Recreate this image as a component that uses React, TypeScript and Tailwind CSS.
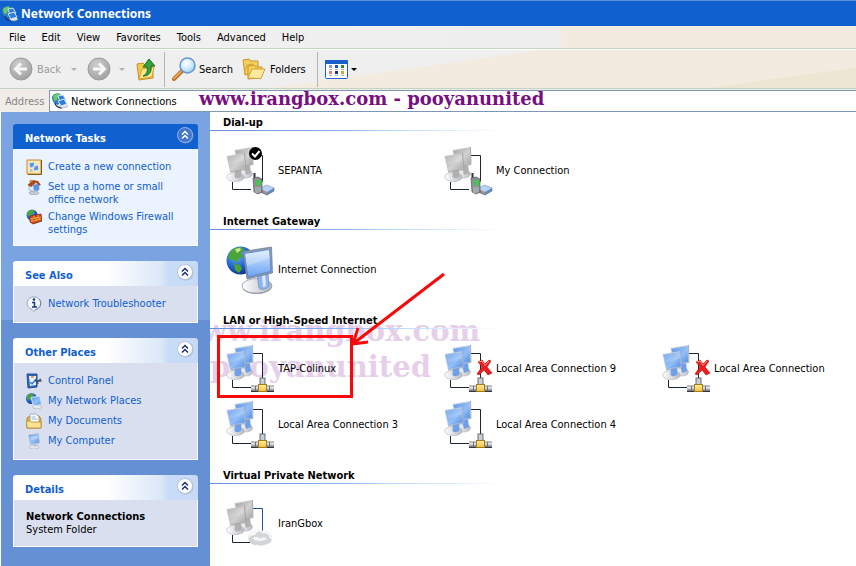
import type { ReactNode } from 'react';

type Tone = 'blue' | 'gray';
type Kind = 'modem' | 'modemDefault' | 'gateway' | 'lan' | 'lanOff' | 'vpn';

interface Connection {
  name: string;
  kind: Kind;
}

const MENUS = ['File', 'Edit', 'View', 'Favorites', 'Tools', 'Advanced', 'Help'];

const GROUPS: { title: string; items: Connection[] }[] = [
  {
    title: 'Dial-up',
    items: [
      { name: 'SEPANTA', kind: 'modemDefault' },
      { name: 'My Connection', kind: 'modem' },
    ],
  },
  { title: 'Internet Gateway', items: [{ name: 'Internet Connection', kind: 'gateway' }] },
  {
    title: 'LAN or High-Speed Internet',
    items: [
      { name: 'TAP-Colinux', kind: 'lan' },
      { name: 'Local Area Connection 9', kind: 'lanOff' },
      { name: 'Local Area Connection', kind: 'lanOff' },
      { name: 'Local Area Connection 3', kind: 'lan' },
      { name: 'Local Area Connection 4', kind: 'lan' },
    ],
  },
  { title: 'Virtual Private Network', items: [{ name: 'IranGbox', kind: 'vpn' }] },
];

/* ---------- shared gradients ---------- */

function Defs() {
  return (
    <svg className="absolute size-0" aria-hidden="true">
      <defs>
        <linearGradient id="scr-blue" x1="0" y1="0" x2="1" y2="1">
          <stop offset="0" stopColor="#5b93e8" />
          <stop offset="0.55" stopColor="#93c0f8" />
          <stop offset="1" stopColor="#5089e0" />
        </linearGradient>
        <linearGradient id="scr-gray" x1="0" y1="0" x2="1" y2="1">
          <stop offset="0" stopColor="#a2a2a2" />
          <stop offset="0.55" stopColor="#d2d2d2" />
          <stop offset="1" stopColor="#a8a8a8" />
        </linearGradient>
        <linearGradient id="scr-light" x1="0" y1="0" x2="0" y2="1">
          <stop offset="0" stopColor="#d6eaff" />
          <stop offset="1" stopColor="#6ca3f0" />
        </linearGradient>
        <linearGradient id="base" x1="0" y1="0" x2="1" y2="0">
          <stop offset="0" stopColor="#ffffff" />
          <stop offset="1" stopColor="#b4bac3" />
        </linearGradient>
        <linearGradient id="metal" x1="0" y1="0" x2="0" y2="1">
          <stop offset="0" stopColor="#7f858c" />
          <stop offset="0.35" stopColor="#eceef0" />
          <stop offset="1" stopColor="#5a5f65" />
        </linearGradient>
        <linearGradient id="gold" x1="0" y1="0" x2="0" y2="1">
          <stop offset="0" stopColor="#fff0a8" />
          <stop offset="1" stopColor="#f4bf3c" />
        </linearGradient>
        <radialGradient id="globe" cx="0.35" cy="0.3" r="0.75">
          <stop offset="0" stopColor="#74b4f5" />
          <stop offset="0.6" stopColor="#1d62cc" />
          <stop offset="1" stopColor="#0a2f86" />
        </radialGradient>
        <radialGradient id="nav" cx="0.4" cy="0.3" r="0.7">
          <stop offset="0" stopColor="#cfcfcf" />
          <stop offset="1" stopColor="#a2a2a2" />
        </radialGradient>
        <radialGradient id="lens" cx="0.4" cy="0.35" r="0.7">
          <stop offset="0" stopColor="#ffffff" />
          <stop offset="0.6" stopColor="#cbe9fb" />
          <stop offset="1" stopColor="#8ec2ee" />
        </radialGradient>
      </defs>
    </svg>
  );
}

/* ---------- connection icons ---------- */

function Monitors({ tone }: { tone: Tone }) {
  const blue = tone === 'blue';
  const fill = blue ? 'url(#scr-blue)' : 'url(#scr-gray)';
  const side = blue ? '#93a6c2' : '#9a9a9a';
  const bezel = blue ? '#bccbe0' : '#c8c8c8';
  const neck = blue ? '#6f9fe8' : '#b0b0b0';
  return (
    <g>
      <ellipse cx="20" cy="27" rx="6.500" ry="4" fill="url(#base)" stroke="#b0b0b0" strokeWidth="0.6" />
      <path d="M18 19l6-1 1 8-5 2z" fill={neck} />
      <path d="M8.500 3L26.500 0l.5 17.500L12 20z" fill={bezel} />
      <path d="M26.500 0l.5 17.500L12 20" fill="none" stroke={side} strokeWidth="0.8" />
      <path d="M9.500 4l16-2.600.5 15.300L13 19z" fill={fill} />
      <ellipse cx="9.500" cy="30" rx="8.800" ry="4.600" fill="url(#base)" stroke="#b0b0b0" strokeWidth="0.6" />
      <path d="M9 22l6-1 .5 8c-2 2.500-5 3-7 1z" fill={neck} />
      <path d="M0.500 9L18.500 6l1.300 16L4 25z" fill={bezel} />
      <path d="M18.500 6l1.300 16L4 25" fill="none" stroke={side} strokeWidth="0.8" />
      <path d="M1.600 10L17.700 7.300l1.200 14L4.700 24z" fill={fill} />
      <path d="M1.600 10L17.700 7.300l.6 6L3.500 18z" fill="#fff" opacity="0.18" />
    </g>
  );
}

function Cables({ color = '#1a2634' }: { color?: string }) {
  return (
    <g fill="none">
      <path d="M27 8.500h9.500v26" stroke={color} />
      <path d="M6.500 35v7.500H25" stroke="#1a2634" />
    </g>
  );
}

function Modem() {
  return (
    <g>
      <path d="M34 42l6-4 8 3v3l-7 4-7-3z" fill="#5f88c8" stroke="#5b6c88" strokeWidth="0.6" />
      <path d="M34 42l6-4 8 3-7 4z" fill="#b7d2f5" />
      <path d="M37 45l4 2v-1.500l-4-2z" fill="#f08c28" />
      <path d="M28.500 26v5" stroke="#333" strokeWidth="2" />
      <path d="M27 31l5-1 4 2v13l-4 2-4-2z" fill="#8b9095" stroke="#55595e" strokeWidth="0.7" />
      <path d="M30 33.500l5-.5v5l-4 1z" fill="#3fcb4b" />
      <path d="M30 40v6M32 40v6M34 40v5" stroke="#d6d9dc" strokeWidth="0.7" />
    </g>
  );
}

function Plug() {
  return (
    <g>
      <rect x="34" y="33" width="5" height="7" fill="#c9ced3" stroke="#4d5358" strokeWidth="0.8" />
      <rect x="25" y="40.500" width="23" height="6" fill="url(#metal)" />
      <path d="M29.500 41v5M43.500 41v5" stroke="#6a7076" />
      <path d="M25 46.500h23" stroke="#33383d" />
      <rect x="32.500" y="39.500" width="8" height="7" fill="url(#gold)" stroke="#a57a17" />
    </g>
  );
}

function ConnectionIcon({ kind }: { kind: Kind }) {
  let art: ReactNode;
  switch (kind) {
    case 'gateway':
      art = (
        <g>
          <circle cx="14.500" cy="14.500" r="14" fill="url(#globe)" />
          <path d="M4 6c3-4 8-5 12-5l2 3-3 3 2 4-5 2-1 4-4-3-4-1c-1-3 0-5 1-7z" fill="#4aa436" />
          <path d="M8 18l6 1 2 4-3 4-4-3z" fill="#4aa436" />
          <path d="M9 3l5-1 1 2-4 3z" fill="#c9e59a" />
          <ellipse cx="31" cy="40" rx="15" ry="7.500" fill="url(#base)" stroke="#8f98a5" strokeWidth="0.8" />
          <path d="M17 43c5 6 22 6 28-1" fill="none" stroke="#8d97a5" />
          <path d="M31 28l11-2 1 14c-2 4-8 4-10 2z" fill="#8fb5ee" stroke="#6d8cba" strokeWidth="0.7" />
          <path d="M36 29l3-1 1 12-3 1z" fill="#dceaff" />
          <path d="M17 5.500L45.500 1l1 26L21 33z" fill="#8f9db0" stroke="#748297" strokeWidth="0.8" />
          <path d="M18.500 7.500L43.500 3.500l1.500 22L22 31z" fill="url(#scr-light)" stroke="#4a7ac8" strokeWidth="0.7" />
          <path d="M19 8l24-4 1 8-23 8z" fill="#fff" opacity="0.25" />
        </g>
      );
      break;
    case 'vpn':
      art = (
        <g>
          <Cables color="#1f4f9a" />
          <Monitors tone="gray" />
          <ellipse cx="34" cy="38" rx="12" ry="7.500" fill="#fafafa" stroke="#e2e2e2" strokeWidth="0.7" />
          <path d="M24 41c-2-4 2-6 5-5 1-4 6-5 8-2 4-1 6 2 6 4 3 1 2 5-1 5-4 2-8 2-11 1-3 1-6 0-7-3z" fill="#d3d6d9" stroke="#bfc3c7" strokeWidth="0.6" />
          <path d="M27 39c1-3 5-3 7 0 2-2 5-2 7 0-2 2-11 3-14 0z" fill="#f6f6f6" />
        </g>
      );
      break;
    case 'modem':
    case 'modemDefault':
      art = (
        <g>
          <Cables />
          <Monitors tone="gray" />
          <Modem />
          {kind === 'modemDefault' && (
            <g>
              <circle cx="29.500" cy="6.500" r="6.500" fill="#000" />
              <path d="M26 6.500l3 3 4.500-5.500" fill="none" stroke="#fff" strokeWidth="2" />
            </g>
          )}
        </g>
      );
      break;
    default:
      art = (
        <g>
          <Cables />
          <Monitors tone="blue" />
          <Plug />
          {kind === 'lanOff' && (
            <g>
              <path d="M34 17l4-2 3 4 4-4 2 1-4 6 5 6-4 2-4-5-5 5-2-1 5-7z" fill="#ee1c1c" stroke="#b40d0d" strokeWidth="0.6" />
              <path d="M35 17l3-1 3 4.500 4-4.500" fill="none" stroke="#ff8d7c" />
            </g>
          )}
        </g>
      );
  }
  return (
    <svg viewBox="0 0 48 48" className="size-12 shrink-0 overflow-visible" aria-hidden="true">
      {art}
    </svg>
  );
}

/* ---------- small icons ---------- */

function SmallIcon({ children }: { children: ReactNode }) {
  return (
    <svg viewBox="0 0 16 16" className="size-4 shrink-0" aria-hidden="true">
      {children}
    </svg>
  );
}

const networkArt = (
  <g>
    <circle cx="5.500" cy="5.500" r="5.500" fill="url(#globe)" />
    <path d="M1 4c2-4 5-4 7-3L6 4 4 7 1 6zM5 8l3 1-2 2z" fill="#4aa436" />
    <ellipse cx="11" cy="14" rx="4.500" ry="2" fill="#e6eaf0" stroke="#8f98a5" strokeWidth="0.5" />
    <path d="M5 4.500l9-1.500 1.500 8.500-8 1.500z" fill="url(#scr-blue)" stroke="#dfe7f2" strokeWidth="0.9" />
  </g>
);

// globe with two linked screens, used by the window and the address bar
const connectionsArt = (
  <g>
    <path d="M0 4c1-4 7-5 9-2l1 6-4 4C2 11 0 8 0 4z" fill="#2f7fb8" />
    <path d="M1 3c2-2 4-3 7-2L6 4 5 7 2 8z" fill="#6cc765" />
    <path d="M3 10c0 3 4 5 7 5" fill="none" stroke="#103a6b" strokeWidth="1.300" />
    <path d="M6 3l5-1 3 5-6 2z" fill="#2f7fe0" stroke="#dceaf8" strokeWidth="0.9" />
    <path d="M7 13c3 3 8 2 9 0l-2-2z" fill="#dfe3e8" stroke="#8b939e" strokeWidth="0.5" />
    <path d="M6 8l6-2 3 5-6 2z" fill="#2f7fe0" stroke="#e9eef5" strokeWidth="0.9" />
  </g>
);

const TASKS: { label: string; art: ReactNode }[] = [
  {
    label: 'Create a new connection',
    art: (
      <g>
        <path d="M1 1h14v14H1z" fill="#f8e7b4" stroke="#c78a2c" />
        <path d="M15.500 1v14.500H2" fill="none" stroke="#8b5a12" />
        <path d="M3 4l5-1 1 5-5 1zM7 7l5-1 1 5-5 1z" fill="#5d92df" stroke="#fff" strokeWidth="0.6" />
        <path d="M4 10l3 1-1 1.500H4z" fill="#a9bdd9" />
      </g>
    ),
  },
  {
    label: 'Set up a home or small office network',
    art: (
      <g>
        <ellipse cx="8" cy="14" rx="5" ry="1.800" fill="#c8cdd4" stroke="#8b929c" strokeWidth="0.5" />
        <path d="M3 5h10v6l-4 2-6-2z" fill="#dfe9f7" stroke="#8a97aa" strokeWidth="0.6" />
        <path d="M7 6l6-1v6l-5 1z" fill="#5b90e4" />
        <path d="M1.500 6L7 1l5 1 3 4-2 .5-3-3L5 8z" fill="#a84a1c" />
        <path d="M3 3l1-2 2 0v2z" fill="#d88c32" />
      </g>
    ),
  },
  {
    label: 'Change Windows Firewall settings',
    art: (
      <g>
        <circle cx="6" cy="6" r="5.500" fill="url(#globe)" />
        <path d="M1 5c1-4 5-5 8-3L6 5 4 8z" fill="#4aa436" />
        <path d="M4 7l11-2 1 7-9 3-3-2z" fill="#d0451b" stroke="#7a1f08" strokeWidth="0.7" />
        <path d="M4 10l11-2M5 12.500l10-2.500M8 6.500v3M12 6v3M10 9v3M6 10v2.500M13 9v2" stroke="#f6c04a" strokeWidth="0.8" />
      </g>
    ),
  },
];

const SEE_ALSO: { label: string; art: ReactNode }[] = [
  {
    label: 'Network Troubleshooter',
    art: (
      <g>
        <path d="M8 .8a7 6.500 0 0 1 1.500 12.800L8 15.500l-2-2A7 6.500 0 0 1 8 .8z" fill="#f4f9ff" stroke="#8fa6c4" />
        <path d="M13 3a7 6.500 0 0 1-3.500 10.600" fill="none" stroke="#6f86a6" />
        <circle cx="8" cy="3.500" r="1.300" fill="#11397f" />
        <path d="M6 6.500h2.500v4M6 11h5" fill="none" stroke="#11397f" strokeWidth="1.500" />
      </g>
    ),
  },
];

const PLACES: { label: string; art: ReactNode }[] = [
  {
    label: 'Control Panel',
    art: (
      <g>
        <path d="M1 1h10v13l-9 1z" fill="#2b66b8" stroke="#24508e" />
        <path d="M3 3h7v9l-6 1z" fill="#eaf3ff" />
        <path d="M4 9l2 2 4-5" fill="none" stroke="#2a77d8" strokeWidth="1.300" />
        <path d="M5 4h3" stroke="#e0762c" strokeWidth="1.300" />
        <path d="M9 8h3l3-2M11 8l1 3M12 8h3.500" fill="none" stroke="#3f4c5e" strokeWidth="1.300" />
      </g>
    ),
  },
  { label: 'My Network Places', art: networkArt },
  {
    label: 'My Documents',
    art: (
      <g>
        <path d="M1 5l3-2h9l2 3v9H1z" fill="#e9b53c" stroke="#a8761a" strokeWidth="0.8" />
        <path d="M4 1h6l3 3v8H4z" fill="#fff" stroke="#8d9cb2" strokeWidth="0.8" />
        <path d="M5.500 4h4M5.500 6h6" stroke="#8fb0de" />
        <path d="M.5 8h4l1 1h9.500v6H1z" fill="#fbe192" stroke="#b98724" strokeWidth="0.8" />
      </g>
    ),
  },
  {
    label: 'My Computer',
    art: (
      <g>
        <ellipse cx="8" cy="14" rx="5" ry="2" fill="#e3e7ec" stroke="#9aa2ad" strokeWidth="0.5" />
        <path d="M7 10l4-1v4l-3 1z" fill="#b9c6d8" />
        <path d="M2.500 2l10-1.500 1 9.500-9 1.500z" fill="url(#scr-blue)" stroke="#b9c7da" strokeWidth="0.9" />
        <path d="M4 3.500l7-1 .5 3-7 2z" fill="#fff" opacity="0.35" />
      </g>
    ),
  },
];

function DownArrow({ className }: { className: string }) {
  return (
    <svg viewBox="0 0 6 3" className={`h-[3px] w-1.5 shrink-0 ${className}`} aria-hidden="true">
      <path d="M0 0h6L3 3z" fill="currentColor" />
    </svg>
  );
}

function NavIcon({ forward = false }: { forward?: boolean }) {
  return (
    <svg viewBox="0 0 24 24" className="size-6 shrink-0" aria-hidden="true">
      <circle cx="12" cy="12" r="11" fill="url(#nav)" stroke="#9c9c9c" />
      <path
        d={forward ? 'M6 12h11M12 6.500l5.500 5.500-5.500 5.500' : 'M18 12H7M12 6.500L6.500 12l5.500 5.500'}
        fill="none"
        stroke="#f6f6f6"
        strokeWidth="3"
      />
    </svg>
  );
}

/* ---------- sidebar ---------- */

interface PanelProps {
  title: string;
  primary?: boolean;
  children: ReactNode;
}

function Panel({ title, primary = false, children }: PanelProps) {
  return (
    <section>
      <header
        className={`flex h-[25px] items-center justify-between rounded-t-[3px] pr-1 pl-3 ${
          primary ? 'bg-[#1060d0]' : 'bg-[linear-gradient(90deg,#fff_50%,#dbe8f8_80%,#c9dcf7_84%,#c6d9f7)]'
        }`}
      >
        <h2 className={`pt-1 text-[11px] leading-[13px] font-bold ${primary ? 'text-white' : 'text-[#1060d0]'}`}>
          {title}
        </h2>
        <button type="button" aria-label={`Collapse ${title}`} className="mb-[3px]">
          <svg viewBox="0 0 18 18" className="size-[18px]" aria-hidden="true">
            <circle cx="9.500" cy="9.500" r="8" fill="#8fa3c8" opacity="0.6" />
            <circle cx="9" cy="9" r="7.500" fill={primary ? '#4376cb' : '#fff'} stroke={primary ? '#8fb2ea' : '#b9c4da'} />
            <path d="M6 8.500l3-3 3 3M6 12.500l3-3 3 3" fill="none" stroke={primary ? '#fff' : '#1d2f6e'} strokeWidth="1.500" />
          </svg>
        </button>
      </header>
      <div className={`border border-t-0 border-white pt-2.5 pr-2 pb-[9px] pl-3 ${primary ? 'bg-[#ebf3ff]' : 'bg-[#d9dfef]'}`}>
        {children}
      </div>
    </section>
  );
}

function LinkList({ items }: { items: { label: string; art: ReactNode }[] }) {
  return (
    <ul className="flex flex-col gap-[3px]">
      {items.map((item) => (
        <li key={item.label}>
          <a href="#" className="flex min-h-[17px] items-start gap-1.5 text-[#1060d0]">
            <SmallIcon>{item.art}</SmallIcon>
            <span className="max-w-[128px] pt-px">{item.label}</span>
          </a>
        </li>
      ))}
    </ul>
  );
}

/* ---------- page ---------- */

function Toolbar() {
  return (
    <div className="flex h-10 items-center border-t border-b border-t-white border-b-[#c3d5c1] bg-[linear-gradient(172deg,#efefef_48%,#f3eae0_48%,#f3eae0_87%,#ece6d3_87%)] pl-[9px]">
      <button type="button" className="flex items-center gap-1 text-[#9b9b9b]">
        <NavIcon />
        <span className="w-[27px] text-left">Back</span>
        <DownArrow className="ml-[3px] text-[#b0b0b0]" />
      </button>
      <button type="button" aria-label="Forward" className="ml-2.5 flex items-center gap-2 text-[#9b9b9b]">
        <NavIcon forward />
        <DownArrow className="text-[#b0b0b0]" />
      </button>
      <button type="button" aria-label="Up" className="ml-2.5">
        <svg viewBox="0 0 22 24" className="h-6 w-[22px]" aria-hidden="true">
          <path d="M2 7l6-1 2 2h8v13l-14 2z" fill="#f3c74a" stroke="#c69122" />
          <path d="M4 22l3-10 12-2-2 10z" fill="#fde68c" stroke="#d6a232" />
          <path d="M8 19c4-2 5-5 4-9H8l6-8 6 7h-4c1 6-2 10-8 10z" fill="#36a03c" stroke="#18702a" />
        </svg>
      </button>
      <div className="mx-[7px] h-[35px] w-px bg-[#b5b5b5]" />
      <button type="button" className="flex items-center gap-[3px]">
        <svg viewBox="0 0 24 24" className="size-6" aria-hidden="true">
          <path d="M2 22l8-8" stroke="#b8732a" strokeWidth="4" strokeLinecap="round" />
          <path d="M2 21.500l7-7" stroke="#f3b35d" strokeWidth="1.500" strokeLinecap="round" />
          <circle cx="15.500" cy="8.500" r="7.500" fill="url(#lens)" stroke="#6796cf" strokeWidth="1.500" />
        </svg>
        <span className="w-[43px] text-left">Search</span>
      </button>
      <button type="button" className="flex items-center gap-1">
        <svg viewBox="0 0 24 24" className="size-6" aria-hidden="true">
          <path d="M1 3l6-1 2 2h7v11L3 18z" fill="#f5cf5c" stroke="#c99527" />
          <path d="M2 17l3-9 6-1" fill="none" stroke="#d9a83a" />
          <path d="M6 9l6-1 2 2h6v4l-3 7-11 1z" fill="#f5cf5c" stroke="#c99527" />
          <path d="M6 21l4-9h13l-4 9.500z" fill="#fdeaa0" stroke="#d2a035" />
        </svg>
        <span className="w-10 text-left">Folders</span>
      </button>
      <div className="mx-[7px] h-[35px] w-px bg-[#b5b5b5]" />
      <button type="button" aria-label="Views" className="flex items-center gap-[3px]">
        <svg viewBox="0 0 23 19" className="h-[19px] w-[23px]" aria-hidden="true">
          <rect x="0.500" y="0.500" width="22" height="18" rx="1" fill="#fff" stroke="#1a5fcb" />
          <rect width="23" height="4" rx="1" fill="#1a5fcb" />
          <path d="M4 5h3v3H4z" fill="#90a0c8" />
          <path d="M10 5h3v3h-3z" fill="#1257c4" />
          <path d="M16 5h3v3h-3z" fill="#2e8b2e" />
          <path d="M4 11h3v3H4z" fill="#f2776b" />
          <path d="M10 11h3v3h-3z" fill="#12357c" />
          <path d="M16 11h3v3h-3z" fill="#d9a520" />
          <path d="M4 9.500h3M10 9.500h3M16 9.500h3M4 15.500h3M10 15.500h3M16 15.500h3" stroke="#b5b5b5" />
        </svg>
        <DownArrow className="text-black" />
      </button>
    </div>
  );
}

export default function App() {
  return (
    <div className="flex min-h-screen flex-col bg-white font-['DejaVu_Sans_Condensed','DejaVu_Sans',sans-serif] text-[11px] leading-[13px] text-black">
      <Defs />
      <header className="flex h-[26px] items-center gap-[3px] border-t border-[#5b8fdc] bg-[#1060d0] pl-[2px]">
        <SmallIcon>{connectionsArt}</SmallIcon>
        <h1 className="font-['Noto_Sans',sans-serif] text-[12px] leading-4 font-bold text-white">Network Connections</h1>
      </header>
      <nav className="flex h-[23px] items-center border-b border-[#c3d5c1] bg-[linear-gradient(90deg,#f2f2f2,#eee_65%,#f3eae0_66%)] pl-px">
        {MENUS.map((menu) => (
          <button key={menu} type="button" className="px-2">
            {menu}
          </button>
        ))}
      </nav>
      <Toolbar />
      <div className="relative flex h-[23px] items-end bg-[#f0ede9]">
        <label htmlFor="address" className="w-[49px] pb-1 pl-[5px] text-[#858585]">
          Address
        </label>
        <div className="flex h-[22px] min-w-0 flex-1 items-center gap-[3px] border border-r-0 border-[#7f96b4] bg-white pl-[2px]">
          <SmallIcon>{connectionsArt}</SmallIcon>
          <input id="address" defaultValue="Network Connections" className="min-w-0 flex-1 bg-transparent outline-none" />
        </div>
        <p className="absolute top-0 left-[199px] font-['DejaVu_Serif',serif] text-[18px] leading-5 font-bold whitespace-nowrap text-[#780f80]">
          www.irangbox.com - pooyanunited
        </p>
      </div>

      <div className="flex flex-1">
        <aside className="ml-px flex w-[209px] shrink-0 flex-col gap-[15px] bg-[linear-gradient(#7aa4e1_208px,#6590d3_208px)] p-3">
          <Panel title="Network Tasks" primary>
            <LinkList items={TASKS} />
          </Panel>
          <Panel title="See Also">
            <LinkList items={SEE_ALSO} />
          </Panel>
          <Panel title="Other Places">
            <LinkList items={PLACES} />
          </Panel>
          <Panel title="Details">
            <p className="font-bold">Network Connections</p>
            <p className="pb-px">System Folder</p>
          </Panel>
        </aside>

        <main className="relative min-w-0 flex-1 overflow-hidden">
          <div className="absolute top-[201px] left-[-33px] font-['DejaVu_Serif',serif] text-[29px] leading-9 font-bold whitespace-nowrap text-[#e6cfe9]">
            <p>www.irangbox.com</p>
            <p className="pl-[33px]">pooyanunited</p>
          </div>
          <div className="relative">
            {GROUPS.map((group) => (
              <section key={group.title}>
                <h2 className="flex h-[18px] items-center pt-[2px] pl-[13px] font-bold">{group.title}</h2>
                <div className="h-px w-[295px] bg-[linear-gradient(90deg,#6590d8,#8db2f0_45%,#b4d6ff_60%,#fff)]" />
                <ul className="grid grid-cols-[218px_218px_1fr] py-3 pl-4">
                  {group.items.map((item) => (
                    <li key={item.name}>
                      <button type="button" className="flex h-14 items-center gap-1 text-left">
                        <ConnectionIcon kind={item.kind} />
                        <span className="pb-0.5">{item.name}</span>
                      </button>
                    </li>
                  ))}
                </ul>
              </section>
            ))}
          </div>
          <svg viewBox="0 0 240 290" className="pointer-events-none absolute top-0 left-0 h-[290px] w-[240px]" aria-hidden="true">
            <g fill="none" stroke="#f80808" strokeWidth="3">
              <rect x="8.500" y="224.500" width="133" height="60" />
              <path d="M234 162L144 231M148 216l-5 16 15-2" />
            </g>
          </svg>
        </main>
      </div>
    </div>
  );
}
